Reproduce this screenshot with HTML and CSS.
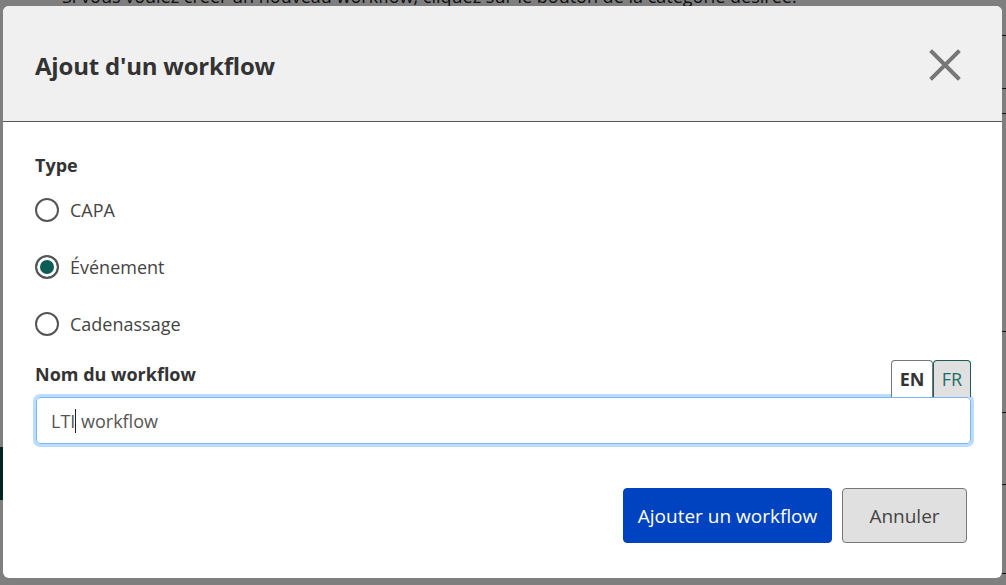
FILE: index.html
```html
<!DOCTYPE html>
<html lang="fr">
<head>
<meta charset="utf-8">
<title>Ajout d'un workflow</title>
<link rel="stylesheet" href="styles.css">
</head>
<body>
<div class="page">
  <p class="page-intro">Si vous voulez créer un nouveau workflow, cliquez sur le bouton de la catégorie désirée.</p>
  <div class="page-side"></div>
  <div class="page-rows">
    <span class="row-line r1"></span>
    <span class="row-line r2"></span>
    <span class="row-line r3"></span>
    <span class="row-line r4"></span>
    <span class="row-line r5"></span>
    <span class="row-line r6"></span>
    <span class="row-line r7"></span>
  </div>
</div>
<div class="overlay"></div>
<div class="modal" role="dialog">
  <div class="modal-header">
    <h1 class="modal-title">Ajout d'un workflow</h1>
    <button class="close" aria-label="Fermer">
      <svg width="32" height="32" viewBox="0 0 32 32"><path d="M3 3 L29 29 M29 3 L3 29" stroke="#777" stroke-width="4" stroke-linecap="square" fill="none"/></svg>
    </button>
  </div>
  <div class="modal-body">
    <div class="field-label">Type</div>
    <div class="radios">
      <label class="radio"><span class="dot"></span>CAPA</label>
      <label class="radio checked"><span class="dot"></span>Événement</label>
      <label class="radio"><span class="dot"></span>Cadenassage</label>
    </div>
    <div class="name-head">
      <div class="field-label">Nom du workflow</div>
      <div class="langs">
        <span class="lang active">EN</span>
        <span class="lang fr">FR</span>
      </div>
    </div>
    <div class="input"><span>LTI</span><span class="caret"></span><span>&nbsp;workflow</span></div>
    <div class="actions">
      <button class="btn primary">Ajouter un workflow</button>
      <button class="btn secondary">Annuler</button>
    </div>
  </div>
</div>
</body>
</html>
```
FILE: styles.css
```css
* { box-sizing: border-box; }
html, body { margin: 0; padding: 0; }
body {
  width: 1006px;
  height: 585px;
  overflow: hidden;
  font-family: "Open Sans", "Noto Sans", sans-serif;
  background: #fff;
  position: relative;
}
.page { position: absolute; inset: 0; }
.page-intro {
  margin: 0;
  position: absolute;
  left: 62px;
  top: -16px;
  font-size: 18px;
  color: #222;
  white-space: nowrap;
}
.page-side {
  position: absolute;
  left: 0;
  top: 447px;
  width: 10px;
  height: 53px;
  background: #0b4a45;
}
.row-line { position: absolute; left: 990px; width: 20px; height: 1px; background: #222; }
.r1 { top: 35px; } .r2 { top: 88px; } .r3 { top: 113px; } .r4 { top: 331px; }
.r5 { top: 412px; } .r6 { top: 484px; } .r7 { top: 573px; }
.overlay {
  position: absolute;
  inset: 0;
  background: rgba(0,0,0,0.5);
}
.modal {
  position: absolute;
  left: 3px;
  top: 6px;
  width: 999px;
  height: 572px;
  background: #fff;
  border-radius: 6px;
  overflow: hidden;
  display: flex;
  flex-direction: column;
}
.modal-header {
  height: 116px;
  background: #f0f0f0;
  border-bottom: 1px solid #555;
  display: flex;
  align-items: center;
  justify-content: space-between;
  padding: 0 41px 0 32px;
}
.modal-title {
  margin: 0;
  font-size: 24px;
  font-weight: 700;
  color: #333;
  letter-spacing: -0.2px;
  padding-top: 4px;
}
.close {
  border: 0;
  background: none;
  padding: 0;
  width: 32px;
  height: 32px;
  margin-top: 2px;
}
.close svg { display: block; }
.modal-body {
  padding: 30px 30px 0 32px;
  color: #444;
}
.field-label {
  font-size: 18px;
  font-weight: 700;
  color: #333;
  line-height: 26px;
}
.radios { display: flex; flex-direction: column; gap: 31px; margin-top: 19px; }
.radio {
  display: flex;
  align-items: center;
  gap: 11px;
  font-size: 18px;
  line-height: 26px;
  color: #444;
}
.dot {
  width: 24px;
  height: 24px;
  border: 2px solid #555;
  border-radius: 50%;
  background: #fff;
  flex: none;
}
.checked .dot {
  border-color: #555;
  background: #0d5c56;
  box-shadow: inset 0 0 0 3px #fff;
}
.name-head {
  display: flex;
  justify-content: space-between;
  align-items: flex-end;
  margin-top: 23px;
  padding-right: 1px;
}
.name-head .field-label { padding-bottom: 10px; }
.langs { display: flex; }
.lang {
  width: 42px;
  height: 37px;
  font-size: 18px;
  display: flex;
  align-items: center;
  justify-content: center;
  border: 1px solid #777;
  border-bottom: 0;
  border-radius: 4px 4px 0 0;
  background: #fff;
  color: #333;
  font-weight: 700;
}
.lang.fr {
  width: 38px;
  border-color: #1b5e57;
  background: #e0e0e0;
  color: #1e6e66;
  font-weight: 400;
}
.input {
  height: 47px;
  margin-right: 1px;
  border: 1px solid #7ab6f5;
  box-shadow: 0 0 0 3px #bcdcfd;
  border-radius: 4px;
  margin-left: 1px;
  display: flex;
  align-items: center;
  padding-left: 14px;
  font-size: 18px;
  color: #555;
}
.caret { width: 1px; height: 24px; background: #222; }
.actions {
  display: flex;
  justify-content: flex-end;
  gap: 10px;
  margin-top: 44px;
  padding-right: 5px;
}
.btn {
  font-family: inherit;
  font-size: 19px;
  height: 55px;
  border-radius: 4px;
  padding: 0 10px;
}
.primary {
  background: #0043c0;
  color: #fff;
  border: 1px solid #0043c0;
  width: 209px;
}
.secondary {
  background: #e0e0e0;
  color: #444;
  border: 1px solid #777;
  width: 125px;
}
```
